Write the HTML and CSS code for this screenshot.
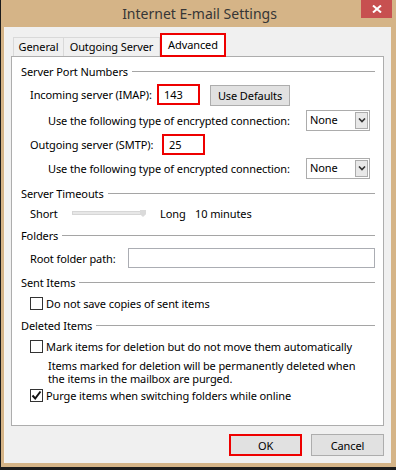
FILE: index.html
```html
<!DOCTYPE html>
<html lang="en">
<head>
    <meta charset="UTF-8">
    <meta name="viewport" content="width=device-width, initial-scale=1.0">
    <title>Internet E-mail Settings</title>
    <link rel="stylesheet" href="styles.css">
</head>
<body>

    <div class="window">
        <div class="titlebar">
            <span class="title">Internet E-mail Settings</span>
            <span class="close-btn">
                <svg width="10" height="8" viewBox="0 0 10 8">
                    <path d="M1 0.5 L9 7.5 M9 0.5 L1 7.5" stroke="#fff" stroke-width="2" fill="none"/>
                </svg>
            </span>
        </div>

        <div class="client">
            <div class="tabs">
                <div class="tab tab-general">General</div>
                <div class="tab tab-outgoing">Outgoing Server</div>
                <div class="tab tab-advanced active">Advanced</div>
            </div>

            <div class="panel">
                <div class="group-title first"><span>Server Port Numbers</span></div>

                <div class="row row-incoming">
                    <span class="label w-imap">Incoming server (IMAP):</span>
                    <div class="text-input port marked">143</div>
                    <button class="btn defaults">Use Defaults</button>
                </div>
                <div class="row row-enc sub">
                    <span class="label w-enc">Use the following type of encrypted connection:</span>
                    <div class="select">
                        <span class="select-value">None</span>
                        <span class="select-arrow">
                            <svg width="8" height="5" viewBox="0 0 8 5">
                                <path d="M1 0.5 L4 3.5 L7 0.5" stroke="#333" stroke-width="1.6" fill="none"/>
                            </svg>
                        </span>
                    </div>
                </div>
                <div class="row row-outgoing">
                    <span class="label w-smtp">Outgoing server (SMTP):</span>
                    <div class="text-input port marked">25</div>
                </div>
                <div class="row row-enc2 sub">
                    <span class="label w-enc">Use the following type of encrypted connection:</span>
                    <div class="select">
                        <span class="select-value">None</span>
                        <span class="select-arrow">
                            <svg width="8" height="5" viewBox="0 0 8 5">
                                <path d="M1 0.5 L4 3.5 L7 0.5" stroke="#333" stroke-width="1.6" fill="none"/>
                            </svg>
                        </span>
                    </div>
                </div>

                <div class="group-title"><span>Server Timeouts</span></div>
                <div class="row row-timeout">
                    <span class="label w-short">Short</span>
                    <div class="slider">
                        <div class="slider-track"></div>
                        <div class="slider-thumb"></div>
                    </div>
                    <span class="label w-long">Long</span>
                    <span class="label">10 minutes</span>
                </div>

                <div class="group-title"><span>Folders</span></div>
                <div class="row row-root">
                    <span class="label w-root">Root folder path:</span>
                    <div class="text-input root-path"></div>
                </div>

                <div class="group-title"><span>Sent Items</span></div>
                <div class="row row-check">
                    <span class="checkbox"></span>
                    <span class="label">Do not save copies of sent items</span>
                </div>

                <div class="group-title"><span>Deleted Items</span></div>
                <div class="row row-check">
                    <span class="checkbox"></span>
                    <span class="label">Mark items for deletion but do not move them automatically</span>
                </div>
                <p class="note">Items marked for deletion will be permanently deleted when<br>the items in the mailbox are purged.</p>
                <div class="row row-purge">
                    <span class="checkbox checked">
                        <svg width="11" height="11" viewBox="0 0 11 11">
                            <path d="M1.5 5.5 L4.2 8.5 L9.5 1.5" stroke="#111" stroke-width="2" fill="none"/>
                        </svg>
                    </span>
                    <span class="label">Purge items when switching folders while online</span>
                </div>
            </div>

            <div class="actions">
                <button class="btn action marked">OK</button>
                <button class="btn action">Cancel</button>
            </div>
        </div>
    </div>

</body>
</html>
```

FILE: styles.css
```css
* {
    box-sizing: border-box;
}

body {
    margin: 0;
    font-family: 'Noto Sans', 'Open Sans', sans-serif;
    font-size: 11px;
    letter-spacing: -0.1px;
    color: #000;
    background-color: #fff;
}

.window {
    width: 396px;
    height: 470px;
    background-color: #d5b487;
    border-left: 1px solid #1b1b1b;
    border-bottom: 3px solid #1b1b1b;
    padding: 0 5px 4px 3px;
}

.titlebar {
    position: relative;
    height: 27px;
    display: flex;
    justify-content: center;
    align-items: center;
}

.title {
    font-size: 14px;
    letter-spacing: 0;
    color: #363636;
    margin-left: 4px;
    margin-top: -1px;
}

.close-btn {
    position: absolute;
    top: 0;
    right: -1px;
    width: 31px;
    height: 18px;
    background-color: #c75050;
    display: flex;
    align-items: center;
    justify-content: center;
}

.client {
    height: 436px;
    background-color: #f0f0f0;
    border-left: 1px solid #f7f3ee;
    padding: 10px 7px 0 6px;
}

/* tabs */

.tabs {
    display: flex;
    height: 19px;
    margin-left: 2px;
}

.tab {
    flex-shrink: 0;
    height: 19px;
    line-height: 18px;
    text-align: center;
    background-color: #f0f0f0;
    border: 1px solid #d9d9d9;
    border-bottom: none;
}

.tab-general {
    width: 51px;
}

.tab-outgoing {
    width: 96px;
    border-left: none;
}

.tab-advanced {
    width: 66px;
}

.tab.active {
    position: relative;
    z-index: 1;
    height: 24px;
    margin-top: -4px;
    line-height: 19px;
    background-color: #fff;
    border: 2px solid #ee0000;
}

.panel {
    height: 370px;
    background-color: #fff;
    border: 1px solid #adadad;
    padding: 6px 8px 0 9px;
}

/* groups and rows */

.group-title {
    display: flex;
    align-items: center;
    height: 16px;
    margin-top: 6px;
}

.group-title.first {
    margin-top: 0;
}

.group-title::after {
    content: "";
    flex: 1;
    height: 1px;
    margin-left: 4px;
    background-color: #a5a5a5;
}

.row {
    display: flex;
    align-items: center;
    height: 16px;
    padding-left: 9px;
}

.row.sub {
    padding-left: 27px;
}

.label {
    flex-shrink: 0;
    white-space: nowrap;
}

.row-incoming {
    height: 21px;
    margin-top: 5px;
}

.row-enc {
    height: 21px;
    margin-top: 5px;
}

.row-outgoing {
    height: 21px;
    margin-top: 3px;
}

.row-enc2 {
    height: 21px;
    margin-top: 3px;
}

.row-timeout {
    margin-top: 4px;
}

.row-root {
    height: 20px;
    margin-top: 5px;
}

.row-check {
    margin-top: 5px;
}

.row-purge {
    margin-top: 2px;
}

.w-imap {
    width: 127px;
}

.w-smtp {
    width: 132px;
}

.w-enc {
    width: 258px;
}

.w-short {
    width: 42px;
}

.w-long {
    width: 35px;
    margin-left: 14px;
}

.w-root {
    width: 98px;
}

/* controls */

.text-input {
    flex-shrink: 0;
    height: 21px;
    background-color: #fff;
    border: 1px solid #abadb3;
    padding-left: 5px;
    line-height: 18px;
}

.text-input.port {
    width: 43px;
}

.text-input.root-path {
    width: 247px;
    height: 20px;
}

.marked {
    border: 2px solid #ee0000 !important;
}

.btn {
    flex-shrink: 0;
    font-family: inherit;
    font-size: 11px;
    letter-spacing: -0.1px;
    color: #000;
    background-color: #e1e1e1;
    border: 1px solid #adadad;
    padding: 0;
    cursor: pointer;
}

.btn:hover {
    background-color: #e5f1fb;
}

.defaults {
    width: 80px;
    height: 21px;
    margin-left: 10px;
    margin-top: 2px;
}

.select {
    flex-shrink: 0;
    display: flex;
    align-items: center;
    width: 64px;
    height: 21px;
    background-color: #fff;
    border: 1px solid #acacac;
    padding-left: 3px;
}

.select-value {
    flex: 1;
    margin-top: -2px;
}

.select-arrow {
    display: flex;
    align-items: center;
    justify-content: center;
    width: 13px;
    height: 17px;
    margin-right: 1px;
    background-color: #e8e8e8;
    border: 1px solid #acacac;
}

.slider {
    position: relative;
    flex-shrink: 0;
    width: 74px;
    height: 16px;
}

.slider-track {
    position: absolute;
    left: 0;
    top: 6px;
    width: 73px;
    height: 4px;
    background-color: #e7e7e7;
    border: 1px solid #d6d6d6;
}

.slider-thumb {
    position: absolute;
    left: 68px;
    top: 5px;
    width: 6px;
    height: 7px;
    background-color: #dadada;
    clip-path: polygon(0 0, 100% 0, 100% 60%, 50% 100%, 0 60%);
}

.checkbox {
    flex-shrink: 0;
    display: flex;
    align-items: center;
    justify-content: center;
    width: 13px;
    height: 13px;
    margin-right: 3px;
    background-color: #fff;
    border: 1px solid #333;
}

.note {
    margin: 5px 0 0 27px;
    line-height: 13px;
    white-space: nowrap;
}

/* dialog buttons */

.actions {
    display: flex;
    justify-content: flex-end;
    gap: 9px;
    margin-top: 8px;
}

.action {
    width: 73px;
    height: 22px;
}
```
